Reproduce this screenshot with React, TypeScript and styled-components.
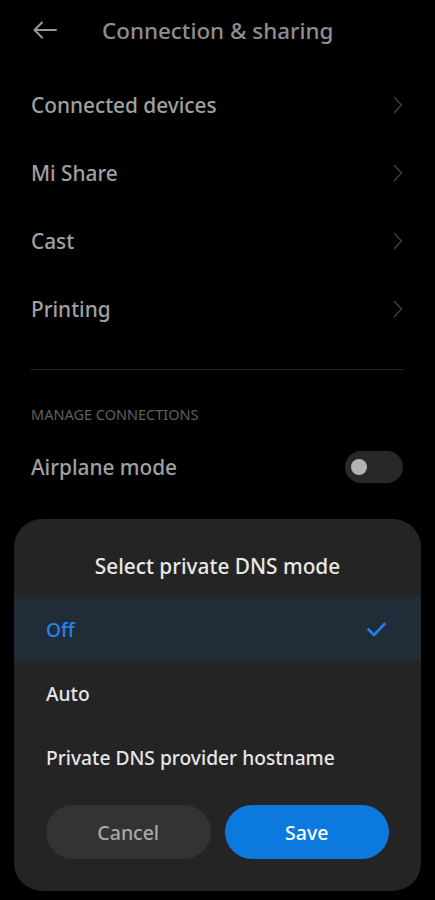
import styled, { createGlobalStyle } from 'styled-components';

const GlobalStyle = createGlobalStyle`
	html, body {
		margin: 0;
		padding: 0;
		background: #000;
	}
	body {
		font-family: 'Noto Sans', Roboto, sans-serif;
		font-weight: 500;
		-webkit-font-smoothing: antialiased;
	}
`;

const settingsRows = ['Connected devices', 'Mi Share', 'Cast', 'Printing'];

const dnsModes = [
	{ label: 'Off', selected: true },
	{ label: 'Auto', selected: false },
	{ label: 'Private DNS provider hostname', selected: false },
];

const BackArrow = () => (
	<svg width="24" height="18" viewBox="0 0 24 18" fill="none">
		<path
			d="M1.5 9H23M1.5 9L9 1.5M1.5 9L9 16.5"
			stroke="#9a9a9a"
			strokeWidth="2"
			strokeLinecap="round"
			strokeLinejoin="round"
		/>
	</svg>
);

const Chevron = () => (
	<svg width="10" height="18" viewBox="0 0 10 18" fill="none">
		<path d="M1.5 1.5L8.5 9L1.5 16.5" stroke="#3c3c3c" strokeWidth="1.6" strokeLinecap="round" strokeLinejoin="round" />
	</svg>
);

const Check = () => (
	<svg width="19" height="15" viewBox="0 0 19 15" fill="none">
		<path d="M1.5 7.5L7 13L17.5 2" stroke="#1f80e6" strokeWidth="2.6" strokeLinecap="round" strokeLinejoin="round" />
	</svg>
);

const App = () => {
	return (
		<>
			<GlobalStyle />
			<Screen>
				<Header>
					<BackButton>
						<BackArrow />
					</BackButton>
					<Title>Connection &amp; sharing</Title>
				</Header>

				<List>
					{settingsRows.map((row) => (
						<Row key={row}>
							<RowLabel>{row}</RowLabel>
							<Chevron />
						</Row>
					))}
				</List>

				<Divider />

				<SectionTitle>MANAGE CONNECTIONS</SectionTitle>
				<Row>
					<RowLabel>Airplane mode</RowLabel>
					<Toggle>
						<Knob />
					</Toggle>
				</Row>

				<Sheet>
					<SheetTitle>Select private DNS mode</SheetTitle>
					<Options>
						{dnsModes.map((mode) => (
							<Option key={mode.label} selected={mode.selected}>
								<OptionLabel selected={mode.selected}>{mode.label}</OptionLabel>
								{mode.selected && <Check />}
							</Option>
						))}
					</Options>
					<Buttons>
						<Button>Cancel</Button>
						<Button primary>Save</Button>
					</Buttons>
				</Sheet>
			</Screen>
		</>
	);
};

const Screen = styled.div`
	position: relative;
	width: 435px;
	height: 900px;
	overflow: hidden;
	background: #000;
`;

const Header = styled.div`
	display: flex;
	align-items: center;
	height: 60px;
	padding-left: 33px;
`;

const BackButton = styled.div`
	display: flex;
	align-items: center;
	width: 69px;
`;

const Title = styled.h1`
	margin: 0;
	font-size: 22.4px;
	font-weight: 500;
	color: #8e8e8e;
`;

const List = styled.div`
	display: flex;
	flex-direction: column;
	padding-top: 11px;
`;

const Row = styled.div`
	display: flex;
	align-items: center;
	justify-content: space-between;
	height: 68px;
	padding: 0 32px 0 31px;
`;

const RowLabel = styled.span`
	font-size: 20.8px;
	color: #a0a0a0;
`;

const Divider = styled.div`
	height: 1px;
	margin: 26px 31px 0;
	background: #262626;
`;

const SectionTitle = styled.div`
	padding: 36px 31px 0;
	margin-bottom: 11px;
	font-size: 14.5px;
	font-weight: 400;
	line-height: 16px;
	color: #5f5f5f;
`;

const Toggle = styled.div`
	display: flex;
	align-items: center;
	width: 58px;
	height: 32px;
	padding-left: 6px;
	box-sizing: border-box;
	border-radius: 16px;
	background: #282828;
`;

const Knob = styled.div`
	width: 16px;
	height: 16px;
	border-radius: 50%;
	background: #b3b3b3;
`;

const Sheet = styled.div`
	position: absolute;
	left: 14px;
	right: 14px;
	bottom: 9px;
	display: flex;
	flex-direction: column;
	padding: 30px 0 32px;
	border-radius: 28px;
	background: #242424;
`;

const SheetTitle = styled.div`
	height: 34px;
	line-height: 34px;
	margin-bottom: 14px;
	text-align: center;
	font-size: 20.8px;
	color: #e8e8e8;
`;

const Options = styled.div`
	display: flex;
	flex-direction: column;
`;

const Option = styled.div<{ selected?: boolean }>`
	display: flex;
	align-items: center;
	justify-content: space-between;
	height: 64px;
	padding: 0 35px 0 32px;
	background: ${(props) => (props.selected ? '#212c39' : 'transparent')};
`;

const OptionLabel = styled.span<{ selected?: boolean }>`
	font-size: 19.2px;
	color: ${(props) => (props.selected ? '#2284ec' : '#e6e6e6')};
`;

const Buttons = styled.div`
	display: grid;
	grid-template-columns: 1fr 1fr;
	gap: 14px;
	padding: 16px 32px 0;
`;

const Button = styled.button<{ primary?: boolean }>`
	height: 54px;
	border: none;
	border-radius: 27px;
	font-family: inherit;
	font-size: 19.5px;
	font-weight: 500;
	color: ${(props) => (props.primary ? '#ffffff' : '#a8a8a8')};
	background: ${(props) => (props.primary ? '#0c79df' : '#333333')};
`;

export default App;
